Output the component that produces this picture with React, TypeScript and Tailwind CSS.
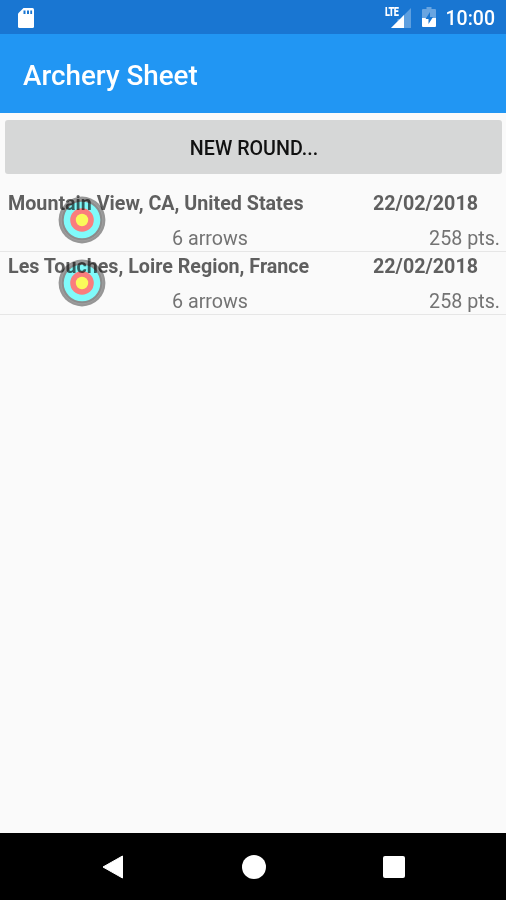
import React from 'react'

type Round = {
  id: number
  place: string
  date: string
  arrows: number
  points: number
}

const rounds: Round[] = [
  {
    id: 1,
    place: 'Mountain View, CA, United States',
    date: '22/02/2018',
    arrows: 6,
    points: 258,
  },
  {
    id: 2,
    place: 'Les Touches, Loire Region, France',
    date: '22/02/2018',
    arrows: 6,
    points: 258,
  },
]

function StatusBar() {
  return (
    <div className="flex h-[34px] shrink-0 items-center bg-[#1976d2] pt-px pr-[11px] pl-[18px] text-white">
      <svg width="16" height="20" viewBox="0 0 16 20">
        <path
          d="M5.5 0H14.5Q16 0 16 1.5V18.5Q16 20 14.5 20H1.5Q0 20 0 18.5V5.5Z"
          fill="#fff"
        />
        <path d="M5.5 2.5h2v3.5h-2zM9 2.5h2v3.5h-2zM12.3 2.5h1.8v3.5h-1.8z" fill="#1976d2" />
      </svg>
      <div className="flex-1" />
      <div className="relative mb-px h-[22px] w-[26px]">
        <svg className="absolute right-0 bottom-0" width="20" height="20" viewBox="0 0 20 20">
          <path d="M20 0V20H0L6.5 13.5V11H11V9Z" fill="#fff" opacity="0.3" />
          <path d="M13 7V20H0Z" fill="#fff" />
        </svg>
        <span className="absolute top-0 left-0 origin-left scale-x-[0.76] text-[12px] leading-[12px] font-black tracking-[-0.6px]">
          LTE
        </span>
      </div>
      <svg className="mb-px ml-[11px]" width="14" height="20" viewBox="0 0 14 20">
        <path d="M4.5 0h5v2H13q1 0 1 1v8H0V3q0-1 1-1h3.5z" fill="#fff" opacity="0.35" />
        <path d="M0 11H14V19q0 1-1 1H1q-1 0-1-1z" fill="#fff" />
        <path d="M8 5L3.5 12H6.5V17L11 10H8Z" fill="#1976d2" />
      </svg>
      <span className="ml-[10px] pt-[3px] text-[19.5px] leading-none font-medium">10:00</span>
    </div>
  )
}

function Target() {
  return (
    <svg
      className="absolute top-[7px] left-[58px] mix-blend-multiply"
      width="48"
      height="48"
      viewBox="0 0 48 48"
    >
      <circle cx="24" cy="24" r="23.4" fill="#999" />
      <circle cx="24" cy="24" r="20.8" fill="#8f8f8f" stroke="#a8a8a8" strokeWidth="0.7" />
      <circle cx="24" cy="24" r="18.3" fill="#83ffff" />
      <circle cx="24" cy="24" r="11.8" fill="#ff8080" />
      <circle cx="24" cy="24" r="6.2" fill="#ffff5c" />
    </svg>
  )
}

function RoundRow({ round }: { round: Round }) {
  return (
    <li className="relative h-[63px] border-b border-[#e6e6e6] text-[19.7px] leading-[23px] text-[#737373]">
      <div className="flex pt-[3px] pl-[8px] font-bold text-[#5f5f5f]">
        <span className="w-[365px] whitespace-nowrap">{round.place}</span>
        <span>{round.date}</span>
      </div>
      <div className="flex justify-between pt-[12px] pr-[6px] pl-[172px]">
        <span>{round.arrows} arrows</span>
        <span>{round.points} pts.</span>
      </div>
      <Target />
    </li>
  )
}

function NavigationBar() {
  return (
    <div className="flex h-[67px] shrink-0 items-center justify-between bg-black pr-[101px] pl-[102px]">
      <svg width="22" height="24" viewBox="0 0 22 24">
        <path d="M20.5 1V23L1 12Z" fill="#fff" stroke="#fff" strokeLinejoin="round" />
      </svg>
      <div className="h-6 w-6 rounded-full bg-white" />
      <div className="h-[22px] w-[22px] rounded-[2px] bg-white" />
    </div>
  )
}

export default function App() {
  return (
    <div className="flex h-screen flex-col bg-[#fafafa] font-['Roboto',sans-serif]">
      <StatusBar />
      <header className="flex h-[79px] shrink-0 items-center bg-[#2196f3] pt-[4px] pl-[23px]">
        <h1 className="text-[27.8px] leading-none font-medium text-white">Archery Sheet</h1>
      </header>
      <main className="flex-1">
        <div className="pt-[7px] pr-[4px] pl-[5px]">
          <button className="h-[54px] w-full rounded-[3px] bg-[#d6d7d7] pt-[3px] pl-px text-[19.7px] font-medium text-[#111]">
            NEW ROUND...
          </button>
        </div>
        <ul className="mt-[15px]">
          {rounds.map((round) => (
            <RoundRow key={round.id} round={round} />
          ))}
        </ul>
      </main>
      <NavigationBar />
    </div>
  )
}
